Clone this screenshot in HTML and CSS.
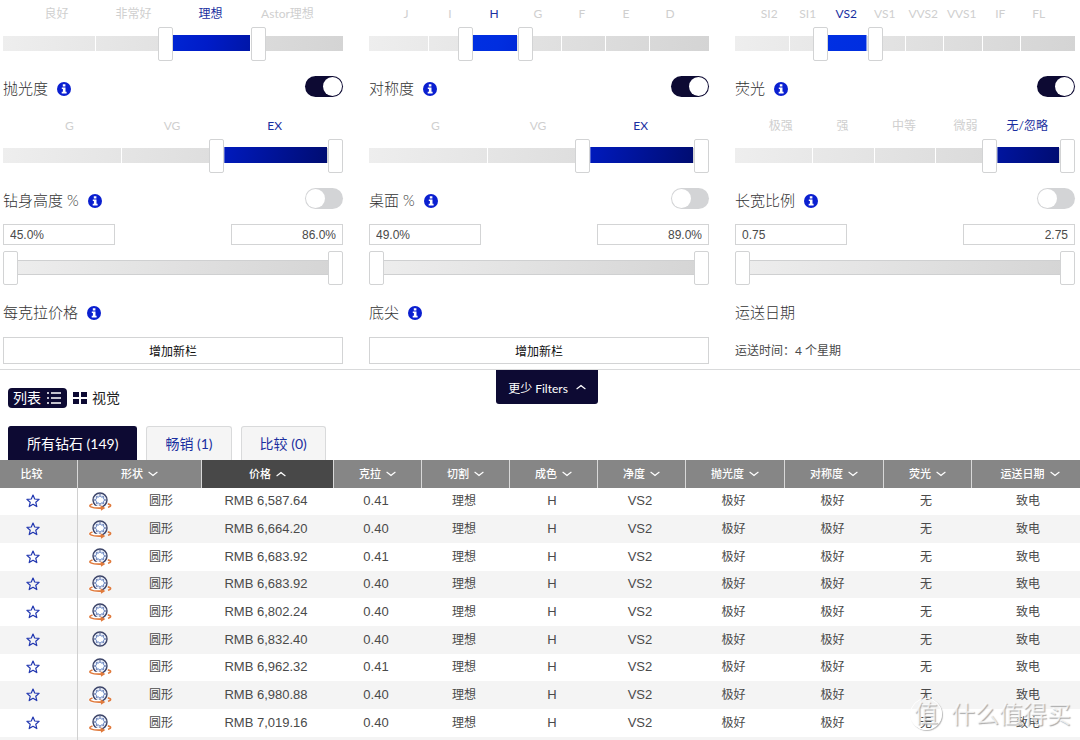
FILE: index.html
```html
<!DOCTYPE html>
<html lang="zh-CN">
<head>
<meta charset="utf-8">
<meta name="viewport" content="width=device-width, initial-scale=1">
<title>钻石搜索</title>
<link rel="stylesheet" href="styles.css">
</head>
<body>
<svg class="symbols" aria-hidden="true">
  <symbol id="info" viewBox="0 0 14 14"><circle cx="7" cy="7" r="7" fill="#0a1fd0"/><path d="M5.800 2.300h2.600v2.200H5.800zM4.800 5.500h3.700v4.300h1.100v1.600H4.700V9.800h1.200V7.100H4.800z" fill="#fff"/></symbol>
  <symbol id="down" viewBox="0 0 10 6"><path d="M.6 1.100Q3 2.800 5 4.500Q7 2.800 9.400 1.100" fill="none" stroke="currentColor" stroke-width="1.200"/></symbol>
  <symbol id="up" viewBox="0 0 10 6"><path d="M.6 4.900Q3 3.200 5 1.500Q7 3.200 9.400 4.900" fill="none" stroke="currentColor" stroke-width="1.200"/></symbol>
  <symbol id="star" viewBox="0 0 14 14"><path d="M7 1l1.700 4 4.400.4-3.300 2.900 1 4.300L7 10.300l-3.800 2.300 1-4.300L.9 5.400 5.300 5z" fill="none" stroke="#2036b0" stroke-width="1.200" stroke-linejoin="round"/></symbol>
  <symbol id="gem" viewBox="0 0 24 20"><circle cx="12" cy="9" r="7" fill="#e6ebf6" stroke="#3c4468" stroke-width="1.400"/><path d="M12 4.800l1.400 1.200 1.800-.2.300 1.800L16.700 9l-1.200 1.400-.3 1.800-1.800-.2L12 13.200 10.600 12l-1.800.2-.3-1.800L7.300 9l1.200-1.400.3-1.800 1.800.2z" fill="#fff" stroke="#5f7fc0"/><path d="M12 2.500v2M12 13.500v2M5.500 9h1.600M16.900 9h1.600M7.400 4.400l1.200 1.200M16.600 4.400l-1.200 1.200M7.400 13.600l1.200-1.200M16.600 13.600l-1.200-1.200" stroke="#55608c"/></symbol>
  <symbol id="spin" viewBox="0 0 24 20"><use href="#gem"/><path d="M5 12.500C-1 15 4 17 14 16.600" fill="none" stroke="#fff" stroke-width="3.500"/><path d="M4.500 12.900C-1.500 14.800 3 17.600 14 17.100M19.800 12.900C23.500 13.600 23.500 15.300 20 16.200" fill="none" stroke="#e07a3c" stroke-width="1.600"/><path d="M12.500 14.200l4.800 2.700-4.300 2.900z" fill="#e07a3c"/></symbol>
</svg>
<main class="page">
  <form class="filters">
    <section class="group first">
      <div class="scale"><span>良好</span><span>非常好</span><span class="on">理想</span><span>Astor理想</span></div>
      <div class="slider" style="--n:4;--a:2;--b:3"><div class="track"><i></i><i></i><i></i><i></i></div><div class="fill"></div><input class="low" type="range" min="0" max="4" value="2" aria-label="切割下限"><input class="high" type="range" min="0" max="4" value="3" aria-label="切割上限"></div>
    </section>
    <section class="group first">
      <div class="scale"><span>J</span><span>I</span><span class="on">H</span><span>G</span><span>F</span><span>E</span><span>D</span></div>
      <div class="slider" style="--n:7;--a:2;--b:3"><div class="track"><i></i><i></i><i></i><i></i><i></i><i></i><i></i></div><div class="fill"></div><input class="low" type="range" min="0" max="7" value="2" aria-label="成色下限"><input class="high" type="range" min="0" max="7" value="3" aria-label="成色上限"></div>
    </section>
    <section class="group first">
      <div class="scale"><span>SI2</span><span>SI1</span><span class="on">VS2</span><span>VS1</span><span>VVS2</span><span>VVS1</span><span>IF</span><span>FL</span></div>
      <div class="slider" style="--n:8;--a:2;--b:3"><div class="track"><i></i><i></i><i></i><i></i><i></i><i></i><i></i><i></i></div><div class="fill"></div><input class="low" type="range" min="0" max="8" value="2" aria-label="净度下限"><input class="high" type="range" min="0" max="8" value="3" aria-label="净度上限"></div>
    </section>

    <section class="group">
      <div class="head"><label class="title" for="polish">抛光度</label><svg class="info"><use href="#info"/></svg><input class="toggle" type="checkbox" id="polish" checked></div>
      <div class="scale"><span>G</span><span>VG</span><span class="on">EX</span></div>
      <div class="slider" style="--n:3;--a:2;--b:3"><div class="track"><i></i><i></i><i></i></div><div class="fill"></div><input class="low" type="range" min="0" max="3" value="2" aria-label="抛光度下限"><input class="high" type="range" min="0" max="3" value="3" aria-label="抛光度上限"></div>
    </section>
    <section class="group">
      <div class="head"><label class="title" for="symmetry">对称度</label><svg class="info"><use href="#info"/></svg><input class="toggle" type="checkbox" id="symmetry" checked></div>
      <div class="scale"><span>G</span><span>VG</span><span class="on">EX</span></div>
      <div class="slider" style="--n:3;--a:2;--b:3"><div class="track"><i></i><i></i><i></i></div><div class="fill"></div><input class="low" type="range" min="0" max="3" value="2" aria-label="对称度下限"><input class="high" type="range" min="0" max="3" value="3" aria-label="对称度上限"></div>
    </section>
    <section class="group">
      <div class="head"><label class="title" for="fluor">荧光</label><svg class="info"><use href="#info"/></svg><input class="toggle" type="checkbox" id="fluor" checked></div>
      <div class="scale"><span>极强</span><span>强</span><span>中等</span><span>微弱</span><span class="on">无/忽略</span></div>
      <div class="slider" style="--n:5;--a:4;--b:5"><div class="track"><i></i><i></i><i></i><i></i><i></i></div><div class="fill"></div><input class="low" type="range" min="0" max="5" value="4" aria-label="荧光下限"><input class="high" type="range" min="0" max="5" value="5" aria-label="荧光上限"></div>
    </section>

    <section class="group">
      <div class="head"><label class="title" for="depth">钻身高度 %</label><svg class="info"><use href="#info"/></svg><input class="toggle" type="checkbox" id="depth"></div>
      <div class="bounds"><input type="text" value="45.0%" aria-label="钻身高度最小值"><input type="text" value="86.0%" aria-label="钻身高度最大值"></div>
      <div class="slider plain"><div class="track"></div><input class="low" type="range" value="0" aria-label="钻身高度下限"><input class="high" type="range" value="100" aria-label="钻身高度上限"></div>
    </section>
    <section class="group">
      <div class="head"><label class="title" for="tablepct">桌面 %</label><svg class="info"><use href="#info"/></svg><input class="toggle" type="checkbox" id="tablepct"></div>
      <div class="bounds"><input type="text" value="49.0%" aria-label="桌面最小值"><input type="text" value="89.0%" aria-label="桌面最大值"></div>
      <div class="slider plain"><div class="track"></div><input class="low" type="range" value="0" aria-label="桌面下限"><input class="high" type="range" value="100" aria-label="桌面上限"></div>
    </section>
    <section class="group">
      <div class="head"><label class="title" for="ratio">长宽比例</label><svg class="info"><use href="#info"/></svg><input class="toggle" type="checkbox" id="ratio"></div>
      <div class="bounds"><input type="text" value="0.75" aria-label="长宽比例最小值"><input type="text" value="2.75" aria-label="长宽比例最大值"></div>
      <div class="slider plain"><div class="track"></div><input class="low" type="range" value="0" aria-label="长宽比例下限"><input class="high" type="range" value="100" aria-label="长宽比例上限"></div>
    </section>

    <section class="group last">
      <div class="head"><span class="title">每克拉价格</span><svg class="info"><use href="#info"/></svg></div>
      <button type="button" class="add">增加新栏</button>
    </section>
    <section class="group last">
      <div class="head"><span class="title">底尖</span><svg class="info"><use href="#info"/></svg></div>
      <button type="button" class="add">增加新栏</button>
    </section>
    <section class="group last">
      <div class="head"><span class="title">运送日期</span></div>
      <p class="shipping">运送时间：4 个星期</p>
    </section>
  </form>

  <div class="toolbar">
    <div class="views">
      <button type="button" class="view active">列表<svg width="16" height="14" viewBox="0 0 16 14"><path d="M1 2h2M1 7h2M1 12h2M5 2h10M5 7h10M5 12h10" stroke="#fff" stroke-width="1.500"/></svg></button>
      <button type="button" class="view"><svg width="14" height="12" viewBox="0 0 14 12"><path d="M0 0h6v5H0zM8 0h6v5H8zM0 7h6v5H0zM8 7h6v5H8z" fill="#0d0a33"/></svg>视觉</button>
    </div>
    <button type="button" class="more">更少 Filters<svg class="chevron"><use href="#up"/></svg></button>
  </div>

  <nav class="tabs">
    <button type="button" class="tab active">所有钻石 (149)</button>
    <button type="button" class="tab">畅销 (1)</button>
    <button type="button" class="tab">比较 (0)</button>
  </nav>

  <table class="results">
    <colgroup><col class="c-compare"><col class="c-shape"><col class="c-price"><col class="c-std"><col class="c-std"><col class="c-std"><col class="c-std"><col class="c-wide"><col class="c-wide"><col class="c-std"><col class="c-ship"></colgroup>
    <thead><tr>
      <th>比较</th>
      <th><button type="button">形状<svg class="chevron"><use href="#down"/></svg></button></th>
      <th class="sorted"><button type="button">价格<svg class="chevron"><use href="#up"/></svg></button></th>
      <th><button type="button">克拉<svg class="chevron"><use href="#down"/></svg></button></th>
      <th><button type="button">切割<svg class="chevron"><use href="#down"/></svg></button></th>
      <th><button type="button">成色<svg class="chevron"><use href="#down"/></svg></button></th>
      <th><button type="button">净度<svg class="chevron"><use href="#down"/></svg></button></th>
      <th><button type="button">抛光度<svg class="chevron"><use href="#down"/></svg></button></th>
      <th><button type="button">对称度<svg class="chevron"><use href="#down"/></svg></button></th>
      <th><button type="button">荧光<svg class="chevron"><use href="#down"/></svg></button></th>
      <th><button type="button">运送日期<svg class="chevron"><use href="#down"/></svg></button></th>
    </tr></thead>
    <tbody>
      <tr><td><button type="button" class="fav" aria-label="比较"><svg><use href="#star"/></svg></button></td><td><div class="shape"><svg><use href="#spin"/></svg>圆形</div></td><td class="num">RMB 6,587.64</td><td class="num">0.41</td><td>理想</td><td class="num">H</td><td class="num">VS2</td><td>极好</td><td>极好</td><td>无</td><td>致电</td></tr>
      <tr><td><button type="button" class="fav" aria-label="比较"><svg><use href="#star"/></svg></button></td><td><div class="shape"><svg><use href="#spin"/></svg>圆形</div></td><td class="num">RMB 6,664.20</td><td class="num">0.40</td><td>理想</td><td class="num">H</td><td class="num">VS2</td><td>极好</td><td>极好</td><td>无</td><td>致电</td></tr>
      <tr><td><button type="button" class="fav" aria-label="比较"><svg><use href="#star"/></svg></button></td><td><div class="shape"><svg><use href="#spin"/></svg>圆形</div></td><td class="num">RMB 6,683.92</td><td class="num">0.41</td><td>理想</td><td class="num">H</td><td class="num">VS2</td><td>极好</td><td>极好</td><td>无</td><td>致电</td></tr>
      <tr><td><button type="button" class="fav" aria-label="比较"><svg><use href="#star"/></svg></button></td><td><div class="shape"><svg><use href="#spin"/></svg>圆形</div></td><td class="num">RMB 6,683.92</td><td class="num">0.40</td><td>理想</td><td class="num">H</td><td class="num">VS2</td><td>极好</td><td>极好</td><td>无</td><td>致电</td></tr>
      <tr><td><button type="button" class="fav" aria-label="比较"><svg><use href="#star"/></svg></button></td><td><div class="shape"><svg><use href="#spin"/></svg>圆形</div></td><td class="num">RMB 6,802.24</td><td class="num">0.40</td><td>理想</td><td class="num">H</td><td class="num">VS2</td><td>极好</td><td>极好</td><td>无</td><td>致电</td></tr>
      <tr><td><button type="button" class="fav" aria-label="比较"><svg><use href="#star"/></svg></button></td><td><div class="shape"><svg><use href="#gem"/></svg>圆形</div></td><td class="num">RMB 6,832.40</td><td class="num">0.40</td><td>理想</td><td class="num">H</td><td class="num">VS2</td><td>极好</td><td>极好</td><td>无</td><td>致电</td></tr>
      <tr><td><button type="button" class="fav" aria-label="比较"><svg><use href="#star"/></svg></button></td><td><div class="shape"><svg><use href="#spin"/></svg>圆形</div></td><td class="num">RMB 6,962.32</td><td class="num">0.41</td><td>理想</td><td class="num">H</td><td class="num">VS2</td><td>极好</td><td>极好</td><td>无</td><td>致电</td></tr>
      <tr><td><button type="button" class="fav" aria-label="比较"><svg><use href="#star"/></svg></button></td><td><div class="shape"><svg><use href="#spin"/></svg>圆形</div></td><td class="num">RMB 6,980.88</td><td class="num">0.40</td><td>理想</td><td class="num">H</td><td class="num">VS2</td><td>极好</td><td>极好</td><td>无</td><td>致电</td></tr>
      <tr><td><button type="button" class="fav" aria-label="比较"><svg><use href="#star"/></svg></button></td><td><div class="shape"><svg><use href="#spin"/></svg>圆形</div></td><td class="num">RMB 7,019.16</td><td class="num">0.40</td><td>理想</td><td class="num">H</td><td class="num">VS2</td><td>极好</td><td>极好</td><td>无</td><td>致电</td></tr>
      <tr><td></td><td colspan="10"></td></tr>
    </tbody>
  </table>
  <div class="watermark"><span class="seal">值</span><span>什么值得买</span></div>
</main>
</body>
</html>
```
FILE: styles.css
```css
* { box-sizing: border-box; }

body {
  margin: 0;
  background: #fff;
  color: #4a4a4a;
  font-family: Lato, "Noto Sans CJK SC", sans-serif;
  font-size: 12px;
}

button, input { font-family: inherit; margin: 0; }
button { border: 0; padding: 0; background: none; cursor: pointer; }

.symbols { position: absolute; width: 0; height: 0; }

.page {
  position: relative;
  height: 100vh;
  overflow: hidden;
}

/* Filters */
.filters {
  display: grid;
  grid-template-columns: repeat(3, minmax(0, 1fr));
  gap: 15px 26px;
  padding: 4px 5px 5px 3px;
  border-bottom: 1px solid #d9dadb;
}

.group { display: flex; flex-direction: column; }

.head {
  display: flex;
  align-items: center;
  gap: 9px;
  height: 25px;
}

.title { color: #333; font-size: 15px; line-height: 25px; font-weight: 300; }
.info { width: 14px; height: 14px; }

.toggle {
  appearance: none;
  align-self: flex-start;
  width: 38px;
  height: 21px;
  margin-left: auto;
  padding: 1px;
  border-radius: 11px;
  background: #d3d4d6;
}
.toggle::before {
  content: "";
  display: block;
  width: 19px;
  height: 19px;
  border-radius: 50%;
  background: #fff;
}
.toggle:checked { background: #0d0a33; }
.toggle:checked::before { margin-left: auto; }

.scale {
  display: flex;
  padding: 0 17px 0 15px;
  margin: 15px 0 3px;
  line-height: 20px;
  color: #cfcfcf;
}
.scale span { flex: 1 1 0; min-width: 0; text-align: center; white-space: nowrap; }
.scale .on { color: #1a2fa0; }
.first .scale { margin-top: 0; }

.slider { position: relative; height: 34px; padding: 9px 0 10px; }

.track {
  display: flex;
  height: 15px;
  padding: 0 16px;
  background: linear-gradient(100deg, #eeeeee, #d4d4d4);
}
.track i { flex: 1 1 0; }
.track i + i { border-left: 1px solid #fff; }
.plain .track { border: 1px solid #cfd0d1; border-width: 1px 0; }

.fill {
  position: absolute;
  inset: 8px 0 10px;
  background: linear-gradient(100deg, #0034ea 0%, #002ee0 38%, #001cc8 60%, #000a66 100%);
  clip-path: inset(0 calc(100% - 16px - (100% - 32px) * var(--b) / var(--n)) 0 calc(16px + (100% - 32px) * var(--a) / var(--n)));
}

.slider input {
  appearance: none;
  position: absolute;
  top: 0;
  height: 34px;
  background: none;
  pointer-events: none;
}
.slider .low { left: 1px; width: calc(100% - 17px); }
.slider .high { left: 17px; width: calc(100% - 17px); }
.plain .low { left: 0; }
.slider input::-webkit-slider-thumb {
  appearance: none;
  width: 15px;
  height: 34px;
  border: 1px solid #d2d3d4;
  border-radius: 2px;
  background: #fff;
  pointer-events: auto;
}

.bounds { display: flex; justify-content: space-between; margin: 11px 0 6px; }
.bounds input {
  width: 33%;
  height: 21px;
  padding: 0 6px;
  border: 1px solid #d3d4d5;
  color: #4a4a4a;
  font-family: "Liberation Sans", sans-serif;
  font-size: 12px;
}
.bounds input + input { text-align: right; }

.add {
  height: 27px;
  margin-top: 12px;
  border: 1px solid #d3d4d5;
  color: #111;
  font-size: 12px;
}
.shipping { margin: 12px 0 0; line-height: 27px; }

/* View switch and filter collapse */
.toolbar {
  display: grid;
  grid-template-columns: 1fr auto 1fr;
  align-items: start;
  height: 56px;
  padding-left: 8px;
}
.views { display: flex; gap: 6px; padding-top: 18px; }
.view {
  display: flex;
  align-items: center;
  gap: 5px;
  height: 20px;
  color: #222;
  font-size: 14px;
  line-height: 20px;
}
.view.active { padding: 0 5px; border-radius: 4px; background: #0d0a33; color: #fff; }
.more {
  display: flex;
  align-items: center;
  justify-content: center;
  gap: 8px;
  height: 34px;
  margin-left: 6px;
  padding: 0 12px;
  border-radius: 0 0 3px 3px;
  background: #0d0a33;
  color: #fff;
  font-size: 12px;
}
.chevron { width: 10px; height: 6px; }

/* Tabs */
.tabs { display: flex; gap: 9px; padding: 0 8px; }
.tab {
  height: 34px;
  padding: 0 18px 2px;
  border: 1px solid #d9dadb;
  border-bottom: 0;
  border-radius: 3px 3px 0 0;
  background: #f5f5f5;
  color: #1a2fa0;
  font-size: 14px;
}
.tab.active { border-color: #0d0a33; background: #0d0a33; color: #fff; }

/* Results */
.results { width: 100%; table-layout: fixed; border-collapse: separate; border-spacing: 0; }
.c-compare { width: 78px; }
.c-shape { width: 124px; }
.c-price { width: 132px; }
.c-std { width: 88px; }
.c-wide { width: 99px; }
.c-ship { width: 108px; }

.results th {
  height: 28px;
  padding: 0;
  border-right: 1px solid #d8d8d8;
  background: #868686;
  color: #fff;
  font-size: 11px;
  font-weight: 500;
  line-height: 16px;
}
.results th:first-child { padding-right: 14px; }
.results th:last-child { padding-left: 8px; border-right: 0; }
.results th.sorted { background: #484848; }
.results th button {
  display: inline-flex;
  align-items: center;
  gap: 5px;
  color: inherit;
  font-size: 11px;
  font-weight: 500;
  line-height: 16px;
}

.results td {
  height: 28px;
  padding: 0 4px 1px 0;
  text-align: center;
  line-height: 20px;
}
.results tr:nth-child(3n + 1) td { height: 27px; }
.results tbody tr:nth-child(even) { background: #f4f4f4; }
.results td:first-child { padding-right: 11px; border-right: 1px solid #d0d0d0; }
.results td:last-child { padding: 0 0 1px 4px; }
.results .num { font-family: "Liberation Sans", sans-serif; font-size: 13px; }

.fav { display: block; margin: 0 auto; height: 14px; }
.fav svg { display: block; width: 14px; height: 14px; }
.shape { display: flex; align-items: center; gap: 37px; padding-left: 10px; }
.shape svg { width: 24px; height: 20px; }

.watermark {
  position: absolute;
  right: 9px;
  bottom: 9px;
  display: flex;
  align-items: center;
  gap: 9px;
  color: rgba(255, 255, 255, 0.7);
  font-size: 24px;
  line-height: 34px;
  text-shadow: 1px 1px 1px #aaa;
  pointer-events: none;
}
.seal {
  width: 32px;
  height: 32px;
  border: 1px solid #fff;
  border-radius: 50%;
  box-shadow: 1px 1px 1px #bbb;
  line-height: 28px;
  text-align: center;
}
```
